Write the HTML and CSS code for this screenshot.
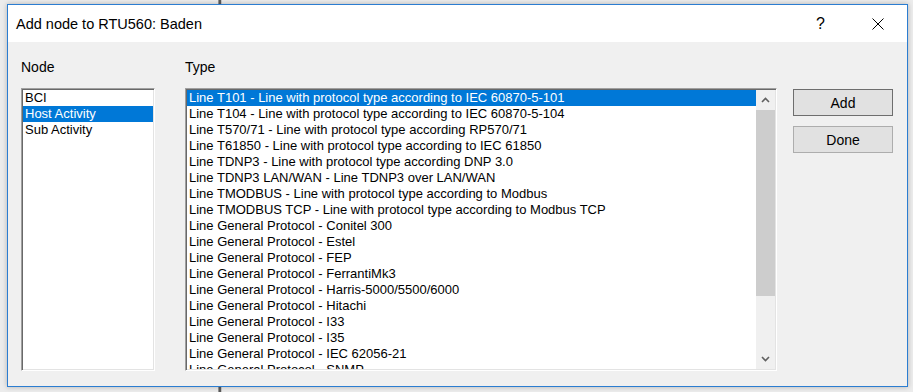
FILE: index.html
```html
<!DOCTYPE html>
<html lang="en">
<head>
  <meta charset="UTF-8" />
  <title>Add node to RTU560: Baden</title>
  <link rel="stylesheet" href="styles.css">
</head>
<body>

<div class="desk">
  <div class="dialog">
    <div class="titlebar">
      <span class="title">Add node to RTU560: Baden</span>
      <span class="help">?</span>
      <span class="close">
        <svg width="12" height="12" viewBox="0 0 12 12"><path d="M0.5 0.5 L11.5 11.5 M11.5 0.5 L0.5 11.5" stroke="#000" stroke-width="1" fill="none"/></svg>
      </span>
    </div>

    <div class="content">
      <div class="col col-node">
        <div class="label">Node</div>
        <ul class="list node-list">
          <li>BCI</li>
          <li class="selected">Host Activity</li>
          <li>Sub Activity</li>
        </ul>
      </div>

      <div class="col col-type">
        <div class="label">Type</div>
        <div class="list type-list">
          <ul>
            <li class="selected">Line T101 - Line with protocol type according to IEC 60870-5-101</li>
            <li>Line T104 - Line with protocol type according to IEC 60870-5-104</li>
            <li>Line T570/71 - Line with protocol type according RP570/71</li>
            <li>Line T61850 - Line with protocol type according to IEC 61850</li>
            <li>Line TDNP3 - Line with protocol type according DNP 3.0</li>
            <li>Line TDNP3 LAN/WAN - Line TDNP3 over LAN/WAN</li>
            <li>Line TMODBUS - Line with protocol type according to Modbus</li>
            <li>Line TMODBUS TCP - Line with protocol type according to Modbus TCP</li>
            <li>Line General Protocol - Conitel 300</li>
            <li>Line General Protocol - Estel</li>
            <li>Line General Protocol - FEP</li>
            <li>Line General Protocol - FerrantiMk3</li>
            <li>Line General Protocol - Harris-5000/5500/6000</li>
            <li>Line General Protocol - Hitachi</li>
            <li>Line General Protocol - I33</li>
            <li>Line General Protocol - I35</li>
            <li>Line General Protocol - IEC 62056-21</li>
            <li>Line General Protocol - SNMP</li>
          </ul>
          <div class="scrollbar">
            <div class="sb-btn">
              <svg width="9" height="6" viewBox="0 0 9 6"><path d="M1 5 L4.5 1.5 L8 5" stroke="#606060" stroke-width="1.6" fill="none"/></svg>
            </div>
            <div class="sb-thumb"></div>
            <div class="sb-track"></div>
            <div class="sb-btn">
              <svg width="9" height="6" viewBox="0 0 9 6"><path d="M1 1 L4.5 4.5 L8 1" stroke="#606060" stroke-width="1.6" fill="none"/></svg>
            </div>
          </div>
        </div>
      </div>

      <div class="col col-buttons">
        <button class="btn default">Add</button>
        <button class="btn">Done</button>
      </div>
    </div>
  </div>
</div>

</body>
</html>
```

FILE: styles.css
```css
body {
  margin: 0;
  font-family: "Liberation Sans", Arial, sans-serif;
  background: #ebebeb;
}

.desk {
  width: 913px;
  height: 392px;
  box-sizing: border-box;
  padding: 4px 5px 5px 7px;
  background:
    linear-gradient(to right, transparent 218px, #d0d0d0 218px, #5a5a5a 219px, #5a5a5a 221px, #c8c8c8 221px, #c8c8c8 222px, transparent 222px),
    #ececec;
}

.dialog {
  height: 100%;
  box-sizing: border-box;
  border: 1px solid #2b7dd1;
  box-shadow: 0 0 5px rgba(0,0,0,0.25);
  display: flex;
  flex-direction: column;
  background: #f0f0f0;
}

.titlebar {
  height: 37px;
  background: #fff;
  display: flex;
  align-items: center;
  padding-left: 8px;
}
.title { font-size: 14.5px; color: #000; flex: 1; }
.help { font-size: 16px; margin-right: 47px; }
.close { display: flex; margin-right: 23px; }

.content {
  flex: 1;
  display: flex;
  padding: 17px 0 0 13px;
}

.label {
  font-size: 14px;
  line-height: 16px;
  height: 16px;
  margin-bottom: 13px;
}

.col-node { width: 134px; }
.col-type { width: 592px; margin-left: 30px; }
.col-buttons {
  width: 100px;
  margin-left: 16px;
  padding-top: 30px;
  display: flex;
  flex-direction: column;
}

.list {
  height: 283px;
  box-sizing: border-box;
  margin: 0;
  padding: 0;
  list-style: none;
  background: #fff;
  border: 1px solid;
  border-color: #a0a0a0 #fff #fff #a0a0a0;
  box-shadow: inset 1px 1px 0 #696969, inset -1px -1px 0 #e3e3e3;
  font-size: 13px;
  overflow: hidden;
}
.node-list { padding: 1px; }
.list li {
  height: 16px;
  line-height: 16px;
  padding-left: 2px;
  white-space: nowrap;
}
.list li.selected { background: #0078d7; color: #fff; }

.type-list { display: flex; padding: 1px; }
.type-list ul {
  flex: 1;
  margin: 0;
  padding: 0;
  list-style: none;
  overflow: hidden;
}

.scrollbar {
  width: 19px;
  display: flex;
  flex-direction: column;
  background: #f0f0f0;
}
.sb-btn {
  height: 20px;
  display: flex;
  align-items: center;
  justify-content: center;
}
.sb-thumb { height: 186px; background: #cdcdcd; }
.sb-track { flex: 1; }

.btn {
  height: 27px;
  margin: 0 0 10px 0;
  font-family: "Liberation Sans", Arial, sans-serif;
  font-size: 14px;
  color: #000;
  background: #e1e1e1;
  border: 1px solid #adadad;
  padding: 0;
}
.btn.default { border-color: #6e6e6e; box-shadow: inset 0 0 0 1px #e1e1e1; }
```
